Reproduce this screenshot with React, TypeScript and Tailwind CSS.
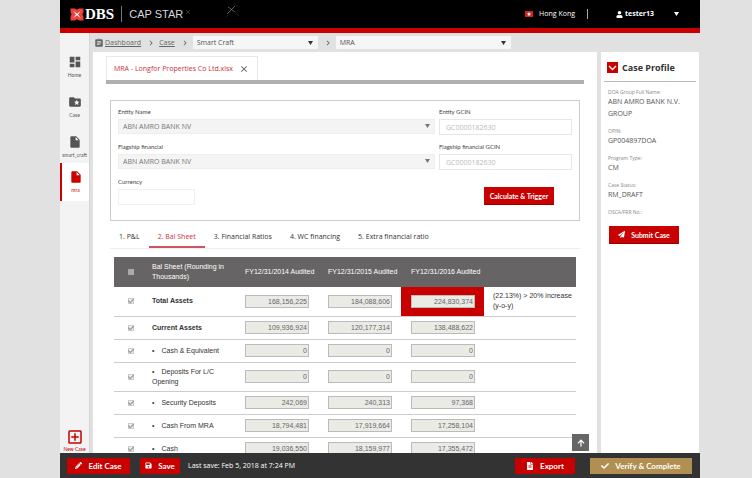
import React from "react";
import {
  MdDashboard,
  MdInsertDriveFile,
  MdAssignment,
  MdChevronRight,
  MdClose,
  MdOutlineAddBox,
} from "react-icons/md";
import {
  FaUser,
  FaPaperPlane,
  FaPencilAlt,
  FaSave,
  FaCheck,
  FaArrowUp,
  FaFileAlt,
} from "react-icons/fa";

function Caret({ className }: { className: string }) {
  return (
    <svg viewBox="0 0 5 4" className={`pointer-events-none h-1 w-[5px] ${className}`} aria-hidden="true">
      <path d="M0 0h5L2.5 4z" fill="currentColor" />
    </svg>
  );
}

function Logo() {
  return (
    <div className="flex items-center">
      <svg viewBox="0 0 26 24" className="h-[13px] w-3.5" aria-hidden="true">
        <path d="M1 1h8l4 2 4-2h8v7l-2 4 2 4v7h-8l-4-2-4 2H1v-7l2-4-2-4z" fill="#f0403a" />
        <path d="m6 5 7 5.500L20 5l-5 7 5 7-7-5.500L6 19l5-7z" fill="#fff" />
      </svg>
      <span className="ml-px font-['Liberation_Serif',serif] text-[15px] leading-4 font-bold text-white">DBS</span>
      <span className="ml-[7px] h-4 w-px bg-[#777]" />
      <span className="ml-[7px] font-['Liberation_Sans',sans-serif] text-[11px] leading-4 text-[#d8d8d8]">
        CAP STAR
      </span>
      <svg viewBox="0 0 56 18" className="ml-0.5 h-[18px] w-14" stroke="#999" strokeWidth="0.6" aria-hidden="true">
        <path d="m1 5 4 4M5 5 1 9" opacity=".6" />
        <path d="m43 2 7 5M50 1l-8 8" />
        <path d="m50 7 4 4M50 1l3-1M43 10l-2 2" opacity=".35" />
      </svg>
    </div>
  );
}

function Header() {
  return (
    <header className="flex h-[33px] shrink-0 items-center border-b-[5px] border-[#c80000] bg-black pr-[21px] pl-2.5 text-white">
      <Logo />
      <div className="ml-auto flex items-center">
        <svg viewBox="0 0 8 6" className="mr-1.5 h-1.5 w-2" aria-hidden="true">
          <path d="M0 0h8v6H0z" fill="#d8221c" />
          <path d="m4 1 .6 1.200 1.400.2-1 1 .3 1.400L4 4.200l-1.300.6.3-1.400-1-1 1.400-.2z" fill="#fff" />
        </svg>
        <span className="text-[7px] leading-3">Hong Kong</span>
        <span className="mr-7 ml-3 h-2.5 w-px bg-[#aaa]" />
        <FaUser className="mr-0.5 size-[7px]" />
        <span className="text-[7px] leading-3 font-bold">tester13</span>
        <Caret className="ml-5" />
      </div>
    </header>
  );
}

function FolderStar() {
  return (
    <svg viewBox="0 0 24 24" className="size-3.5" fill="currentColor" aria-hidden="true">
      <path d="M20 6h-8l-2-2H4c-1.100 0-2 .9-2 2v12c0 1.100.9 2 2 2h16c1.100 0 2-.9 2-2V8c0-1.100-.9-2-2-2zm-2.060 11L15 15.280 12.060 17l.78-3.330-2.590-2.240 3.410-.29L15 8l1.340 3.140 3.410.29-2.590 2.240.78 3.330z" />
    </svg>
  );
}

function Sidebar() {
  const item = "flex h-10 w-full flex-col items-center pt-3 text-[#555]";
  const label = "mt-0.5 font-['Lato'] text-[5px] leading-[8px] whitespace-nowrap";
  return (
    <nav className="flex w-[30px] shrink-0 flex-col overflow-hidden border-r border-[#d4d4d4] bg-[#f3f3f3] pt-2.5">
      <button className={item}>
        <MdDashboard className="size-3.5" />
        <span className={label}>Home</span>
      </button>
      <button className={item}>
        <FolderStar />
        <span className={label}>Case</span>
      </button>
      <button className={item}>
        <MdInsertDriveFile className="size-3.5" />
        <span className={label}>smart_craft</span>
      </button>
      <button className="flex h-[38px] w-full flex-col items-center border-l-2 border-[#c80000] bg-white pt-[7px] text-[#c80000]">
        <MdInsertDriveFile className="size-3.5" />
        <span className={label}>mra</span>
      </button>
      <button className="mt-auto flex w-full flex-col items-center pb-px text-[#c80000]">
        <MdOutlineAddBox className="size-[18px]" />
        <span className="font-['Lato'] text-[5px] leading-[6px] whitespace-nowrap">New Case</span>
      </button>
    </nav>
  );
}

function Breadcrumb() {
  const select =
    "block h-[13px] w-full appearance-none rounded-[1px] bg-[#f6f6f6] pl-1 text-[7px] leading-[13px] text-[#555]";
  return (
    <div className="flex h-[19px] shrink-0 items-center pl-px text-[#666]">
      <MdAssignment className="size-2.5" />
      <a href="#dashboard" className="ml-px text-[7px] leading-3 underline">
        Dashboard
      </a>
      <MdChevronRight className="mr-[3px] ml-[5px] size-2.5" />
      <a href="#case" className="text-[7px] leading-3 underline">
        Case
      </a>
      <MdChevronRight className="mr-[3px] ml-[5px] size-2.5" />
      <div className="relative w-[125px]">
        <select aria-label="Case name" className={select}>
          <option>Smart Craft</option>
        </select>
        <Caret className="absolute top-[5px] right-[5px] text-[#333]" />
      </div>
      <MdChevronRight className="mr-[3px] ml-[5px] size-2.5" />
      <div className="relative w-[175px]">
        <select aria-label="Section" className={select}>
          <option>MRA</option>
        </select>
        <Caret className="absolute top-[5px] right-[5px] text-[#333]" />
      </div>
    </div>
  );
}

function EntitySelect({ id, label }: { id: string; label: string }) {
  return (
    <div>
      <label htmlFor={id} className="block font-['Lato'] text-[6px] leading-3 text-[#444]">
        {label}
      </label>
      <div className="relative mt-px">
        <select
          id={id}
          className="block h-[15px] w-full appearance-none border border-[#eee] bg-[#f4f4f4] pl-1 text-[7px] leading-[13px] text-[#777]"
        >
          <option>ABN AMRO BANK NV</option>
        </select>
        <Caret className="absolute top-[5px] right-[5px] text-[#777]" />
      </div>
    </div>
  );
}

function GcinInput({ id, label }: { id: string; label: string }) {
  return (
    <div>
      <label htmlFor={id} className="block font-['Lato'] text-[6px] leading-3 text-[#444]">
        {label}
      </label>
      <input
        id={id}
        defaultValue="GC0000182630"
        className="mt-px block h-4 w-full border border-[#e6e6e6] bg-white pl-1.5 text-[7px] leading-[14px] text-[#bbb]"
      />
    </div>
  );
}

function EntityForm() {
  return (
    <section className="mx-[17px] mt-4 shrink-0 border border-[#ccc] px-[7px] pt-[5px] pb-[15px]">
      <div className="grid grid-cols-[1fr_133px] gap-x-1">
        <EntitySelect id="entity" label="Entity Name" />
        <GcinInput id="entity-gcin" label="Entity GCIN" />
      </div>
      <div className="mt-1.5 grid grid-cols-[1fr_133px] gap-x-1">
        <EntitySelect id="flagship" label="Flagship financial" />
        <GcinInput id="flagship-gcin" label="Flagship financial GCIN" />
      </div>
      <div className="mt-1.5 flex justify-between">
        <div>
          <label htmlFor="currency" className="block font-['Lato'] text-[6px] leading-3 text-[#444]">
            Currency
          </label>
          <input id="currency" className="mt-px block h-4 w-[77px] border border-[#f0f0f0] text-[7px]" />
        </div>
        <button className="mt-[11px] mr-[18px] h-[18px] w-[70px] border-b border-[#900] bg-[#c80000] font-['Lato'] text-[7px] leading-4 font-bold whitespace-nowrap text-white">
          Calculate &amp; Trigger
        </button>
      </div>
    </section>
  );
}

const tabs = ["1. P&L", "2. Bal Sheet", "3. Financial Ratios", "4. WC financing", "5. Extra financial ratio"];

function Tabs() {
  return (
    <div role="tablist" className="mx-[17px] mt-1.5 flex h-[22px] shrink-0 border-b border-[#eee]">
      {tabs.map((t, i) => (
        <button
          key={t}
          role="tab"
          aria-selected={i === 1}
          className={
            i === 1
              ? "border-b-2 border-[#cc5560] px-[9px] text-[7px] leading-3 whitespace-nowrap text-[#c8303c]"
              : "border-b-2 border-transparent px-[9px] text-[7px] leading-3 whitespace-nowrap text-[#333]"
          }
        >
          {t}
        </button>
      ))}
    </div>
  );
}

type Row = { name: string; values: string[]; bold?: boolean; tall?: boolean; note?: string };

const rows: Row[] = [
  {
    name: "Total Assets",
    values: ["168,156,225", "184,088,606", "224,830,374"],
    bold: true,
    tall: true,
    note: "(22.13%) > 20% increase (y-o-y)",
  },
  { name: "Current Assets", values: ["109,936,924", "120,177,314", "138,488,622"], bold: true },
  { name: "Cash & Equivalent", values: ["0", "0", "0"] },
  { name: "Deposits For L/C Opening", values: ["0", "0", "0"], tall: true },
  { name: "Security Deposits", values: ["242,069", "240,313", "97,368"] },
  { name: "Cash From MRA", values: ["18,794,481", "17,919,664", "17,258,104"] },
  { name: "Cash", values: ["19,036,550", "18,159,977", "17,355,472"] },
];

const years = ["FY12/31/2014 Audited", "FY12/31/2015 Audited", "FY12/31/2016 Audited"];

function Tick({ label }: { label: string }) {
  return (
    <span className="relative ml-3.5 block size-1.5">
      <input
        type="checkbox"
        defaultChecked
        aria-label={label}
        className="block size-1.5 appearance-none border border-[#ccc] bg-[#f0f0f0]"
      />
      <FaCheck className="pointer-events-none absolute inset-0 size-1.5 text-[#999]" />
    </span>
  );
}

function BalanceTable() {
  return (
    <div className="mx-[21px] mt-2">
      <table className="w-full table-fixed border-collapse font-['Liberation_Sans',Arial,sans-serif] text-[7px] leading-[10px] text-[#333]">
        <colgroup>
          <col className="w-[38px]" />
          <col className="w-[83px]" />
          <col className="w-[83px]" />
          <col className="w-[83px]" />
          <col className="w-[83px]" />
          <col />
        </colgroup>
        <thead>
          <tr className="h-[30px] bg-[#666464] text-left text-white">
            <th>
              <input
                type="checkbox"
                aria-label="Select all rows"
                className="ml-3.5 block size-1.5 appearance-none bg-[#aaa]"
              />
            </th>
            <th className="font-normal">Bal Sheet (Rounding in Thousands)</th>
            {years.map((y) => (
              <th key={y} className="pl-2.5 font-normal whitespace-nowrap">
                {y}
              </th>
            ))}
            <th />
          </tr>
        </thead>
        <tbody>
          {rows.map((r) => (
            <tr key={r.name} className={r.tall ? "h-[29px] border-b border-[#ccc]" : "h-[23px] border-b border-[#ccc]"}>
              <td className="p-0">
                <Tick label={r.name} />
              </td>
              <td className={r.bold ? "font-bold" : "pr-2"}>
                {!r.bold && <span className="mr-[7px]">•</span>}
                {r.name}
              </td>
              {r.values.map((v, i) => (
                <td key={i} className={r.note && i === 2 ? "bg-[#c80000] pr-[9px] pl-2.5" : "pr-[9px] pl-2.5"}>
                  <input
                    defaultValue={v}
                    aria-label={`${r.name} ${years[i]}`}
                    className="block h-[13px] w-full border border-[#bbb] bg-[#ebebe6] pr-px text-right text-[7px] leading-[11px] text-[#666]"
                  />
                </td>
              ))}
              <td className="pl-[9px]">{r.note}</td>
            </tr>
          ))}
        </tbody>
      </table>
    </div>
  );
}

function MainPanel() {
  return (
    <main className="relative min-w-0 flex-1 bg-white">
      <div className="flex h-full flex-col overflow-y-auto [scrollbar-width:none]">
        <div className="mx-[13px] mt-1 shrink-0 border-b-4 border-[#b0b0b0]">
          <div className="flex h-6 w-[152px] items-center border border-b-0 border-[#e8e8e8] pl-[7px]">
            <span className="text-[7px] leading-3 whitespace-nowrap text-[#c8303c]">
              MRA - Longfor Properties Co Ltd.xlsx
            </span>
            <button aria-label="Close tab" className="ml-1.5 text-[#555]">
              <MdClose className="size-2.5" />
            </button>
          </div>
        </div>
        <EntityForm />
        <Tabs />
        <BalanceTable />
      </div>
      <button
        aria-label="Back to top"
        className="absolute right-2 bottom-0.5 flex size-[17px] items-center justify-center bg-[#666]"
      >
        <FaArrowUp className="size-2 text-white" />
      </button>
    </main>
  );
}

const profile = [
  ["DOA Group Full Name:", "ABN AMRO BANK N.V. GROUP"],
  ["OPIN:", "GP004897DOA"],
  ["Program Type:", "CM"],
  ["Case Status:", "RM_DRAFT"],
  ["OSCA/FRR No.:", ""],
];

function CaseProfile() {
  return (
    <aside className="w-[98px] shrink-0 bg-white px-[3px]">
      <div className="flex h-[30px] items-center border-b border-[#bbb] pt-0.5 pl-[3px]">
        <button aria-label="Collapse" className="flex size-[11px] items-center justify-center bg-[#c80000]">
          <svg viewBox="0 0 9 6" className="h-1.5 w-[9px]" fill="none" stroke="#fff" strokeWidth="1.300" aria-hidden="true">
            <path d="m1 1 3.500 3.500L8 1" />
          </svg>
        </button>
        <h2 className="ml-1 text-[9px] leading-3 font-bold text-[#333]">Case Profile</h2>
      </div>
      <dl className="mt-1.5 pl-1">
        {profile.map(([k, v]) => (
          <div key={k} className="mb-[7px]">
            <dt className="text-[5px] leading-[8px] text-[#888]">{k}</dt>
            <dd className="text-[7px] leading-3 text-[#555]">{v}</dd>
          </div>
        ))}
      </dl>
      <button className="mt-2.5 ml-[5px] flex h-[18px] w-[70px] items-center justify-center gap-1.5 border-b border-[#900] bg-[#c80000] font-['Lato'] text-[7px] leading-3 font-bold text-white">
        <FaPaperPlane className="size-[7px]" />
        Submit Case
      </button>
    </aside>
  );
}

function Footer() {
  const red =
    "flex h-4 items-center justify-center gap-1.5 rounded-[1px] bg-[#c80000] font-['Lato'] text-[8px] leading-3 font-bold whitespace-nowrap text-white";
  return (
    <footer className="flex h-[25px] shrink-0 items-center bg-[#333] pr-2 pl-[7px]">
      <button className={`${red} w-[63px]`}>
        <FaPencilAlt className="size-[7px]" />
        Edit Case
      </button>
      <button className={`${red} ml-2.5 w-10`}>
        <FaSave className="size-[7px]" />
        Save
      </button>
      <span className="ml-2 text-[7px] leading-3 whitespace-nowrap text-white">
        Last save: Feb 5, 2018 at 7:24 PM
      </span>
      <button className={`${red} ml-auto w-[60px]`}>
        <FaFileAlt className="size-2" />
        Export
      </button>
      <button className="ml-[15px] flex h-4 w-[102px] items-center justify-center gap-1.5 bg-[#b08f50] font-['Lato'] text-[8px] leading-3 font-bold whitespace-nowrap text-white">
        <FaCheck className="size-2" />
        Verify &amp; Complete
      </button>
    </footer>
  );
}

export default function App() {
  return (
    <div className="h-screen bg-[#e1e1e1] pr-[52px] pl-[60px] font-['Open_Sans','Noto_Sans',sans-serif]">
      <div className="flex h-full flex-col">
        <Header />
        <div className="flex min-h-0 flex-1">
          <Sidebar />
          <div className="ml-[3px] flex min-w-0 flex-1 flex-col">
            <Breadcrumb />
            <div className="flex min-h-0 flex-1 gap-1 pr-px">
              <MainPanel />
              <CaseProfile />
            </div>
          </div>
        </div>
        <Footer />
      </div>
    </div>
  );
}
